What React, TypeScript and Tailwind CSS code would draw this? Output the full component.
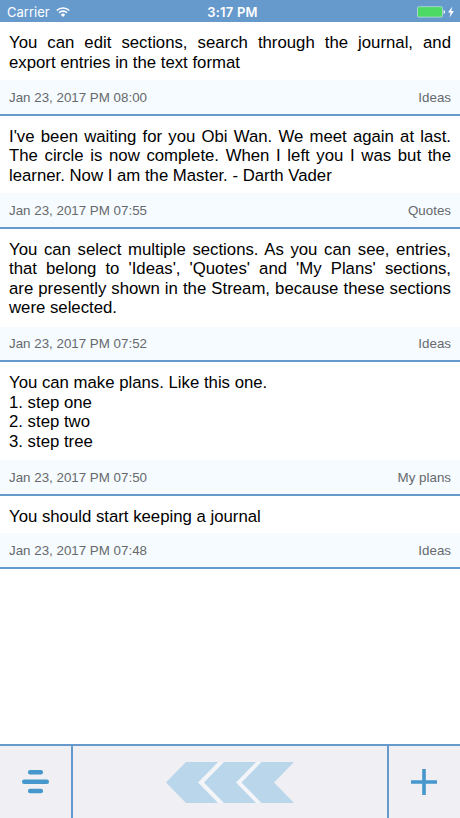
import React from 'react';

interface Entry {
  lines: string[];
  date: string;
  section: string;
  height: string;
}

const entries: Entry[] = [
  {
    lines: ['You can edit sections, search through the journal, and', 'export entries in the text format'],
    date: 'Jan 23, 2017 PM 08:00',
    section: 'Ideas',
    height: 'h-[93.5px]',
  },
  {
    lines: [
      "I've been waiting for you Obi Wan. We meet again at last.",
      'The circle is now complete. When I left you I was but the',
      'learner. Now I am the Master. - Darth Vader',
    ],
    date: 'Jan 23, 2017 PM 07:55',
    section: 'Quotes',
    height: 'h-[113px]',
  },
  {
    lines: [
      'You can select multiple sections. As you can see, entries,',
      "that belong to 'Ideas', 'Quotes' and 'My Plans' sections,",
      'are presently shown in the Stream, because these sections',
      'were selected.',
    ],
    date: 'Jan 23, 2017 PM 07:52',
    section: 'Ideas',
    height: 'h-[133.5px]',
  },
  {
    lines: ['You can make plans. Like this one.', '1. step one', '2. step two', '3. step tree'],
    date: 'Jan 23, 2017 PM 07:50',
    section: 'My plans',
    height: 'h-[133.5px]',
  },
  {
    lines: ['You should start keeping a journal'],
    date: 'Jan 23, 2017 PM 07:48',
    section: 'Ideas',
    height: 'h-[73px]',
  },
];

const StatusBar: React.FC = () => (
  <header className="grid h-[22px] shrink-0 grid-cols-3 items-center bg-[#6699cc] pt-[2px] pr-[5px] pl-[7px] text-[13px] leading-none text-white">
    <div className="flex items-center gap-[6px]">
      <span className="font-['Inter',sans-serif] text-[13px]">Carrier</span>
      <svg width="14" height="10" viewBox="0 0 14 10" fill="none" stroke="white" strokeWidth="1.6">
        <path d="M0.8 3.5a8.8 8.8 0 0 1 12.4 0" />
        <path d="M3 5.8a5.7 5.7 0 0 1 8 0" />
        <path d="M4.8 7.7a3.1 3.1 0 0 1 4.4 0L7 9.9z" fill="white" stroke="none" />
      </svg>
    </div>
    <span className="pl-[3px] text-center font-['Inter',sans-serif] font-semibold tracking-[0.2px]">3:17 PM</span>
    <svg className="justify-self-end" width="38" height="12" viewBox="0 0 38 12">
      <rect x="0.5" y="0.7" width="25" height="10.4" rx="1.2" fill="#4cd964" stroke="#a7d5d2" />
      <path d="M26.6 4.1q1.5.3 1.5 1.9t-1.5 1.9z" fill="white" />
      <path d="M35.3 0.6L31 6.6h2.6l-1 4.8 4.3-6.3h-2.6z" fill="white" />
    </svg>
  </header>
);

const EntryCard: React.FC<{ entry: Entry }> = ({ entry }) => (
  <article className={`flex flex-col border-b-2 border-[#6699cc] bg-white ${entry.height}`}>
    <div className="flex-1 px-[9px] pt-[11px] text-[16.75px] leading-[19.5px] text-black">
      {entry.lines.map((line, index) => {
        const justified = entry.section !== 'My plans' && index < entry.lines.length - 1;

        return (
          <p
            key={index}
            className={`whitespace-nowrap ${justified ? '[text-align-last:justify]' : ''}`}
          >
            {line}
          </p>
        );
      })}
    </div>
    <footer className="flex h-[33.5px] shrink-0 items-center justify-between bg-[#f5fbff] px-[9px] pt-[2px] text-[13.35px] text-[#67696c]">
      <time>{entry.date}</time>
      <span>{entry.section}</span>
    </footer>
  </article>
);

const BottomBar: React.FC = () => (
  <nav className="flex h-[74px] shrink-0 border-t-2 border-[#6699cc] bg-[#efeff4]">
    <button className="flex w-[73px] justify-center border-r-2 border-[#6699cc] pt-[23px]" aria-label="Sections">
      <svg width="28" height="26" viewBox="0 0 28 26" fill="#4698cc">
        <rect x="6" y="1" width="15" height="4.6" rx="2.1" />
        <rect x="0" y="10.4" width="27" height="4.6" rx="2.1" />
        <rect x="6" y="19.7" width="15" height="4.6" rx="2.1" />
      </svg>
    </button>
    <div className="flex flex-1 justify-center pt-[16px]">
      <svg width="128" height="41" viewBox="0 0 128 41">
        <path d="M52 0L32 20.5 52 41h6L38 20.5 58 0z" fill="#f4f5f9" />
        <path d="M89.5 0L69.5 20.5 89.5 41h6L75.5 20.5 95.5 0z" fill="#f4f5f9" />
        <g fill="#b9d6eb">
          <path d="M20 0h32L32 20.5 52 41H20L0 20.5z" />
          <path d="M58 0h32L70 20.5 90 41H58L38 20.5z" />
          <path d="M95.5 0H128L108 20.5 128 41H95.5L75.5 20.5z" />
        </g>
      </svg>
    </div>
    <button className="flex w-[73px] justify-center border-l-2 border-[#6699cc] pt-[23px] pr-[2px]" aria-label="Add entry">
      <svg width="26" height="26" viewBox="0 0 26 26" fill="#4698cc">
        <path d="M11.2 0h3.6v11.2H26v3.6H14.8V26h-3.6V14.8H0v-3.6h11.2z" />
      </svg>
    </button>
  </nav>
);

const App: React.FC = () => {
  return (
    <div className="flex h-screen w-full flex-col overflow-hidden bg-white font-['Liberation_Sans',Arial,sans-serif]">
      <StatusBar />
      <main className="min-h-0 flex-1">
        {entries.map((entry) => (
          <EntryCard key={entry.date} entry={entry} />
        ))}
      </main>
      <BottomBar />
    </div>
  );
};

export default App;
